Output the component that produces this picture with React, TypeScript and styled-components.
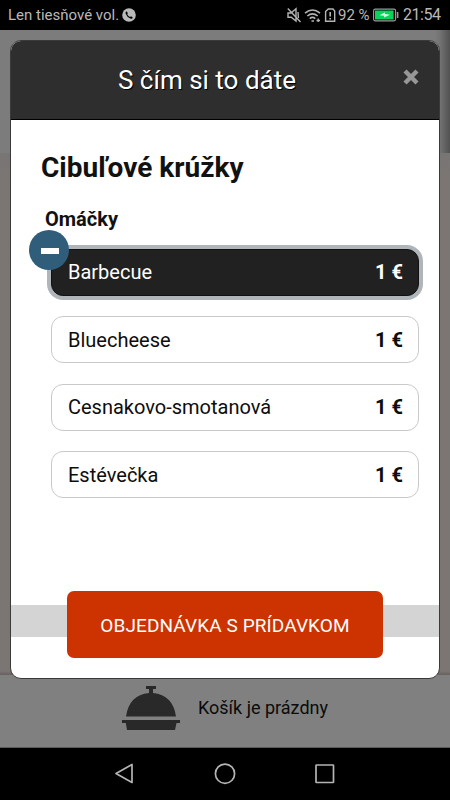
import React, { useState } from "react";
import styled, { createGlobalStyle } from "styled-components";

const GlobalStyle = createGlobalStyle`
  * { box-sizing: border-box; }
  body { margin: 0; background: #000; }
  button { border: 0; padding: 0; background: none; font: inherit; color: inherit; text-align: left; }
`;

const Phone = styled.div`
  width: 450px;
  height: 800px;
  display: flex;
  flex-direction: column;
  overflow: hidden;
  background: #000;
  font-family: Roboto, "Liberation Sans", sans-serif;
`;

const StatusBar = styled.header`
  height: 30px;
  flex: none;
  display: flex;
  justify-content: space-between;
  padding: 0 9px 0 8px;
  color: #b9b9b9;
  line-height: 31px;
  white-space: nowrap;
`;

const StatusGroup = styled.div`
  display: flex;
  align-items: center;
`;

const Carrier = styled.span`
  font-size: 15px;
  margin-right: 3px;
`;

const Percent = styled.span`
  font-size: 15px;
  width: 35px;
  line-height: 29px;
  letter-spacing: 0;
`;

const Clock = styled.span`
  font-size: 16px;
  width: 38px;
  margin-left: 4px;
  line-height: 32px;
  letter-spacing: -0.45px;
`;

const Stage = styled.main`
  height: 718px;
  flex: none;
  position: relative;
  display: flex;
  flex-direction: column;
`;

const DimHeader = styled.div`
  height: 123px;
  flex: none;
  background: linear-gradient(90deg, #7c7c7c 0 435px, #737373 440px, #515151 450px);
`;

const DimPage = styled.div`
  flex: 1;
  background: linear-gradient(#787575, #7b7673 30px, #7b7673 calc(100% - 4px), #666260);
`;

const Cart = styled.footer`
  height: 73px;
  flex: none;
  display: flex;
  padding: 10px 0 0 122px;
  background: #808080;
  border-bottom: 1px solid #5a5a5a;
`;

const CartText = styled.span`
  margin: 11px 0 0 18px;
  font-size: 18px;
  line-height: 24px;
  color: #0b0b0b;
  white-space: nowrap;
`;

const Dialog = styled.section`
  position: absolute;
  top: 10px;
  left: 10px;
  width: 430px;
  height: 639px;
  display: flex;
  flex-direction: column;
  border: 1px solid #3c3a39;
  border-radius: 11px;
  background: #fff;
  overflow: hidden;
`;

const DialogHeader = styled.div`
  height: 79px;
  flex: none;
  display: grid;
  grid-template-columns: 50px 1fr 50px;
  padding-left: 7px;
  background: #2e2e2e;
  border-bottom: 1px solid #000;
  color: #fff;
`;

const Title = styled.h1`
  grid-column: 2;
  margin: 23px 0 0;
  padding-right: 43px;
  font-size: 26px;
  line-height: 32px;
  font-weight: 400;
  text-align: center;
  text-shadow: 1px 1px 0 #000;
  white-space: nowrap;
`;

const Close = styled.button`
  width: 16px;
  height: 16px;
  margin: 28px 0 0 14px;
  display: flex;
`;

const Content = styled.div`
  height: 484.5px;
  flex: none;
  padding: 30px 20px 0 30px;
`;

const Dish = styled.h2`
  margin: 0 0 21px;
  font-size: 28px;
  line-height: 36px;
  font-weight: 700;
  color: #111;
  white-space: nowrap;
`;

const GroupName = styled.h3`
  margin: 0 0 17.5px 4px;
  font-size: 20px;
  line-height: 24px;
  font-weight: 700;
  color: #111;
`;

const Options = styled.div`
  display: flex;
  flex-direction: column;
  gap: 20.5px;
  padding-left: 10px;
`;

const Option = styled.button<{ $selected: boolean }>`
  position: relative;
  height: 47px;
  width: 368px;
  display: flex;
  justify-content: space-between;
  align-items: center;
  padding: 0 16px;
  border: 1px solid ${(p) => (p.$selected ? "#111" : "#c9c9c9")};
  border-radius: 12px;
  background: ${(p) => (p.$selected ? "#212121" : "#fff")};
  color: ${(p) => (p.$selected ? "#fff" : "#0d0d0d")};
  box-shadow: ${(p) => (p.$selected ? "0 0 0 4px #b0b5ba" : "none")};
  font-size: 20px;
  white-space: nowrap;
`;

const Price = styled.b`
  font-weight: 700;
  margin-right: -1px;
`;

const Badge = styled.span`
  position: absolute;
  left: -23px;
  top: -19.5px;
  width: 40px;
  height: 40px;
  display: grid;
  place-items: center;
  border-radius: 50%;
  background: #2f5d7a;

  &::after {
    content: "";
    width: 18px;
    height: 6px;
    margin: 2px 0 0 2px;
    background: #fff;
  }
`;

const ActionBand = styled.div`
  height: 32px;
  flex: none;
  display: flex;
  justify-content: center;
  align-items: center;
  background: #d4d4d4;
`;

const OrderButton = styled.button`
  flex: none;
  width: 316px;
  height: 67px;
  margin-top: 7px;
  border-radius: 7px;
  background: #cc3300;
  color: #fff;
  font-size: 19px;
  font-weight: 400;
  line-height: 70px;
  letter-spacing: 0.1px;
  text-align: center;
  white-space: nowrap;
`;

const NavBar = styled.nav`
  flex: 1;
  display: flex;
  justify-content: center;
  gap: 76px;
  padding-top: 14px;
`;

const icon = { fill: "none", stroke: "#b4b4b4", strokeWidth: 1.4 };

const PhoneIcon = () => (
  <svg width="14" height="14" viewBox="0 0 14 14">
    <circle cx="7" cy="7" r="6.8" fill="#b9b9b9" />
    <path d="M4.3 3.2Q3.2 4 3.7 5.7Q5 9.2 8.4 10.5Q10.1 11 10.9 9.8L9.1 8.2L7.9 8.9Q6 8 5.2 6.2L5.9 5Z" fill="#000" />
  </svg>
);

const StatusIcons = () => (
  <svg width="51" height="30" viewBox="0 0 51 30" {...icon}>
    <path d="M1 13H4L9 8.8V21L4.2 17.2H1Z M0.8 8.5L13.5 22" />
    <path d="M11 12L11.4 18" />
    <path d="M18 13.2Q25.5 6.8 33 13.2M20.3 16Q25.5 11.6 30.7 16M22.7 18.6Q25.5 16.3 28.3 18.6" strokeWidth="1.6" />
    <path d="M24.5 21H27M29.5 20.5H33M31.2 18.5V22" strokeWidth="1.4" />
    <path d="M41.3 9H46L47.7 11V21.3H38.6V11.5Z" />
    <path d="M43.2 12V16.5M43.2 18V19.6" strokeWidth="1.6" />
  </svg>
);

const Battery = () => (
  <svg width="26" height="14" viewBox="0 0 26 14">
    <rect x=".6" y="1.1" width="22" height="11.8" rx="1.6" fill="none" stroke="#9c9c9c" strokeWidth="1.1" />
    <rect x="2" y="2.5" width="18.5" height="9" fill="#08d35b" />
    <path d="M24.6 4V10" stroke="#9c9c9c" strokeWidth="1.6" />
    <path d="M6.5 7.2L12.2 4.2L12 6L17 6.8L11 9.6L11.3 7.8Z" fill="#d9ffe5" />
  </svg>
);

const Cloche = () => (
  <svg width="58" height="46" viewBox="0 0 58 46" fill="#292929">
    <path d="M24 1H34V4H31V8Q51 10 54 31.500H4Q7 10 27 8V4H24Z" />
    <path d="M0 35H58V38H54.500L53 45H5L3.800 38H0Z" />
  </svg>
);

const sauces = ["Barbecue", "Bluecheese", "Cesnakovo-smotanová", "Estévečka"];

export default function App() {
  const [selected, setSelected] = useState("Barbecue");
  return (
    <Phone>
      <GlobalStyle />
      <StatusBar>
        <StatusGroup>
          <Carrier>Len tiesňové vol.</Carrier>
          <PhoneIcon />
        </StatusGroup>
        <StatusGroup>
          <StatusIcons />
          <Percent>92 %</Percent>
          <Battery />
          <Clock>21:54</Clock>
        </StatusGroup>
      </StatusBar>
      <Stage>
        <DimHeader />
        <DimPage />
        <Cart>
          <Cloche />
          <CartText>Košík je prázdny</CartText>
        </Cart>
        <Dialog>
          <DialogHeader>
            <Title>S čím si to dáte</Title>
            <Close aria-label="Zavrieť">
              <svg width="16" height="16" viewBox="0 0 16 16" stroke="#979797" strokeWidth="4.4">
                <path d="M2 2L14 14M14 2L2 14" />
              </svg>
            </Close>
          </DialogHeader>
          <Content>
            <Dish>Cibuľové krúžky</Dish>
            <GroupName>Omáčky</GroupName>
            <Options>
              {sauces.map((name) => (
                <Option key={name} $selected={name === selected} onClick={() => setSelected(name)}>
                  {name === selected && <Badge />}
                  <span>{name}</span>
                  <Price>1 €</Price>
                </Option>
              ))}
            </Options>
          </Content>
          <ActionBand>
            <OrderButton>OBJEDNÁVKA S PRÍDAVKOM</OrderButton>
          </ActionBand>
        </Dialog>
      </Stage>
      <NavBar>
        <svg width="24" height="24" viewBox="0 0 24 24" {...icon}>
          <path d="M3 11.500L19 2.500V20.500Z" strokeWidth="1.700" strokeLinejoin="round" />
        </svg>
        <svg width="24" height="24" viewBox="0 0 24 24" {...icon}>
          <circle cx="12" cy="11.700" r="9.600" strokeWidth="1.700" />
        </svg>
        <svg width="24" height="24" viewBox="0 0 24 24" {...icon}>
          <rect x="3" y="3" width="17.500" height="17.500" rx=".5" strokeWidth="1.700" />
        </svg>
      </NavBar>
    </Phone>
  );
}
